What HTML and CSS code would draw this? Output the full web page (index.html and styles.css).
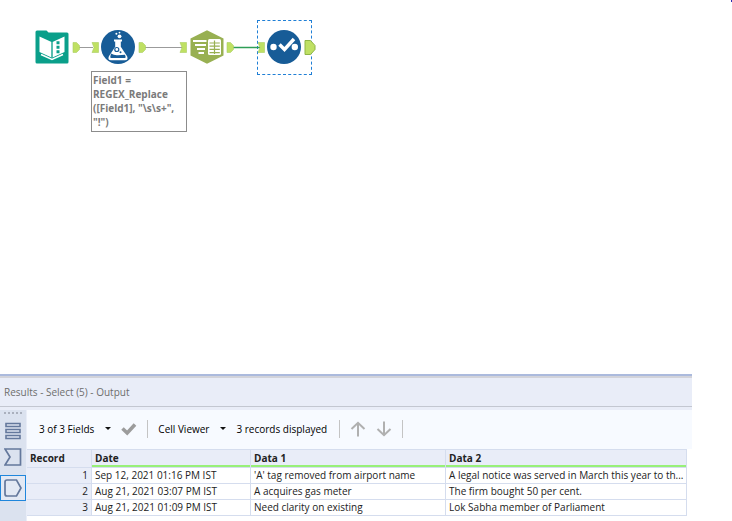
FILE: index.html
```html
<!DOCTYPE html>
<html lang="en">
<head>
  <meta charset="UTF-8">
  <meta name="viewport" content="width=device-width, initial-scale=1.0">
  <title>Results - Select (5) - Output</title>
  <link rel="stylesheet" href="styles.css">
</head>
<body>
  <main class="canvas">
    <div class="selection"></div>
    <!-- connections and anchors -->
    <svg class="wires" width="330" height="90" viewBox="0 0 330 90" aria-hidden="true">
      <path d="M79 47.500H93M145 47.500H182" stroke="#9b9b9b" fill="none"/>
      <path d="M233 47.500H260" stroke="#2f9e56" stroke-width="1.500" fill="none"/>
      <g fill="#bfe063" stroke="#a9cf62" stroke-width=".6">
        <path d="M73 42.500h3.500l3 3v4l-3 3H73zM139 42.500h3.500l3 3v4l-3 3H139zM227 42.500h3.500l3 3v4l-3 3H227z"/>
        <path d="M92 42.500h6.500v10H92l2-5zM180 42.500h6.500v10H180l2-5zM258 42.500h6.500v10H258l2-5z"/>
        <path d="M305 40.500h5.500l4.500 5v4l-4.500 5H305z" stroke="#8fb545" stroke-width="1"/>
      </g>
    </svg>

    <div class="node node-input">
      <svg width="34" height="34" viewBox="0 0 34 34" role="img" aria-label="Input Data">
        <path d="M2 .5h9.500l2 2H32q1.500 0 1.500 1.500v28q0 1.500-1.500 1.500H2Q.5 33.500.5 32V2Q.5.500 2 .5z" fill="#0a9f8a"/>
        <path d="M4.500 6.500L16.500 12v15.500L4.500 22zM29.500 6.500L17.500 12v15.500l12-5.500z" fill="#fff"/>
        <path d="M17 12v15" stroke="#0a9f8a" stroke-width=".7"/>
        <path d="M6 24.500l11 5 11-5" fill="none" stroke="#fff" stroke-width="1.500"/>
        <path d="M21.500 11.300h3v3h-3zM21.500 15.800h3v3h-3zM21.500 20.300h3v3h-3z" fill="#0a9f8a"/>
      </svg>
    </div>

    <div class="node node-formula">
      <svg width="34" height="34" viewBox="0 0 34 34" role="img" aria-label="Formula">
        <circle cx="17" cy="17" r="17" fill="#175c97"/>
        <path d="M13 9.500h8v2h-1.200v5.200l6.300 9.500q1.600 4-2.100 4H10q-3.700 0-2.100-4l6.300-9.500v-5.200H13z" fill="#fff"/>
        <path d="M10 23.500q3.500 2.200 7 1.700t7-.5l.6 2q.3 1.200-1 1.200H10.300q-1.300 0-1-1.200z" fill="#175c97"/>
        <circle cx="15.800" cy="19.500" r="2" fill="none" stroke="#175c97" stroke-width="1.200"/>
        <circle cx="19.500" cy="22.300" r="1" fill="#175c97"/>
        <circle cx="18.500" cy="6.300" r="1.900" fill="#fff"/>
        <circle cx="15.400" cy="3.800" r="1" fill="#fff"/>
        <circle cx="18.500" cy="2.600" r=".9" fill="#fff"/>
      </svg>
    </div>

    <p class="annotation">Field1 =<br>REGEX_Replace<br>([Field1], "\s\s+",<br>"!")</p>

    <div class="node node-columns">
      <svg width="34" height="34" viewBox="0 0 34 34" role="img" aria-label="Text To Columns">
        <path d="M17 .2l16.500 8.400v16.800L17 33.800.5 25.400V8.600z" fill="#98b052"/>
        <path d="M3 11h13.500M5 15h11M7 19h8M8.500 23h5.500" stroke="#fff" stroke-width="2" fill="none"/>
        <rect x="18" y="9" width="13" height="16" rx="1.500" fill="#fff"/>
        <path d="M19.500 13h10.300M19.500 16.200h10.300M19.500 19.400h10.300M19.500 22.600h10.300M24.500 10.500v13.500" stroke="#98b052" stroke-width="1.200" fill="none"/>
      </svg>
    </div>

    <div class="node node-select">
      <svg width="34" height="34" viewBox="0 0 34 34" role="img" aria-label="Select">
        <circle cx="17" cy="17" r="17" fill="#175c97"/>
        <circle cx="6.500" cy="17" r="3.200" fill="#fff"/>
        <circle cx="27.800" cy="17" r="3.200" fill="#fff"/>
        <path d="M12.500 14.500l5 5L27 9" fill="none" stroke="#fff" stroke-width="3.400"/>
      </svg>
    </div>
    <span class="mark"></span>
  </main>

  <section class="results">
    <h1 class="results-title">Results - Select (5) - Output</h1>
    <div class="results-body">
      <nav class="side">
        <span class="grip"></span>
        <button class="side-btn" type="button" aria-label="Messages">
          <svg width="18" height="18" viewBox="0 0 18 18">
            <path d="M2 1.500h14v3H2zM2 7.500h14v3H2zM2 13.500h14v3H2z" fill="none" stroke="#64789c" stroke-width="1.600"/>
          </svg>
        </button>
        <button class="side-btn" type="button" aria-label="Input anchor">
          <svg width="18" height="18" viewBox="0 0 18 18">
            <path d="M1 1h15.500v16H1l5-8z" fill="none" stroke="#64789c" stroke-width="1.700"/>
          </svg>
        </button>
        <button class="side-btn active" type="button" aria-label="Output anchor">
          <svg width="18" height="18" viewBox="0 0 18 18">
            <path d="M3 1h9.500l4.500 8-4.500 8H3q-2 0-2-2V3q0-2 2-2z" fill="none" stroke="#64789c" stroke-width="1.700"/>
          </svg>
        </button>
      </nav>

      <div class="data">
        <div class="toolbar">
          <button class="menu-btn" type="button" aria-haspopup="true">3 of 3 Fields <span class="caret"></span></button>
          <button class="icon-btn" type="button" aria-label="Apply">
            <svg width="16" height="14" viewBox="0 0 16 14">
              <path d="M1.500 6.500l4.700 4.500L14 2.500" fill="none" stroke="#9c9c9c" stroke-width="3.600"/>
            </svg>
          </button>
          <span class="divider"></span>
          <button class="menu-btn" type="button" aria-haspopup="true">Cell Viewer <span class="caret"></span></button>
          <span class="count">3 records displayed</span>
          <span class="divider"></span>
          <button class="icon-btn" type="button" aria-label="Previous">
            <svg width="16" height="16" viewBox="0 0 16 16">
              <path d="M8 15.500V2M1.500 8L8 1.800 14.500 8" fill="none" stroke="#b0b0b0" stroke-width="2"/>
            </svg>
          </button>
          <button class="icon-btn" type="button" aria-label="Next">
            <svg width="16" height="16" viewBox="0 0 16 16">
              <path d="M8 .5V14M1.500 8L8 14.200 14.500 8" fill="none" stroke="#b0b0b0" stroke-width="2"/>
            </svg>
          </button>
          <span class="divider"></span>
        </div>

        <table class="grid">
          <colgroup>
            <col class="col-record">
            <col class="col-date">
            <col class="col-data1">
            <col>
          </colgroup>
          <thead>
            <tr><th class="record">Record</th><th>Date</th><th>Data 1</th><th>Data 2</th></tr>
          </thead>
          <tbody>
            <tr><td class="record">1</td><td>Sep 12, 2021 01:16 PM IST</td><td>'A' tag removed from airport name</td><td>A legal notice was served in March this year to th...</td></tr>
            <tr><td class="record">2</td><td>Aug 21, 2021 03:07 PM IST</td><td>A acquires gas meter</td><td>The firm bought 50 per cent.</td></tr>
            <tr><td class="record">3</td><td>Aug 21, 2021 01:09 PM IST</td><td>Need clarity on existing</td><td>Lok Sabha member of Parliament</td></tr>
          </tbody>
        </table>
      </div>
    </div>
  </section>
</body>
</html>
```

FILE: styles.css
```css
* {
  box-sizing: border-box;
}
body {
  margin: 0;
  min-height: 100vh;
  display: flex;
  flex-direction: column;
  background-color: #fff;
  font-family: "Open Sans", "Noto Sans", sans-serif;
  font-size: 10px;
  color: #222;
}
button {
  padding: 0;
  border: none;
  background: none;
  font: inherit;
  color: inherit;
  cursor: pointer;
}
svg {
  display: block;
}

/* Workflow canvas */
.canvas {
  position: relative;
  flex: 1;
  min-height: 150px;
}
.wires {
  position: absolute;
  left: 0;
  top: 0;
}
.node {
  position: absolute;
  top: 30px;
}
.node-input {
  left: 35px;
}
.node-formula {
  left: 101px;
}
.node-columns {
  left: 190px;
}
.node-select {
  left: 267px;
}
.selection {
  position: absolute;
  left: 257px;
  top: 20px;
  width: 55px;
  height: 55px;
  border: 1px dashed #1f7fd6;
}
.annotation {
  position: absolute;
  left: 91px;
  top: 71px;
  width: 96px;
  height: 61px;
  margin: 0;
  padding: 1px;
  border: 1px solid #8c8c8c;
  font-weight: bold;
  line-height: 14px;
  color: #7a7a7a;
  white-space: nowrap;
}
.mark {
  position: absolute;
  right: 0;
  top: 0;
  width: 1px;
  height: 2px;
  background-color: #2a2ab0;
}

/* Results window */
.results {
  margin-right: 40px;
  border-top: 2px solid #abbadd;
  background-color: #fff;
}
.results-title {
  margin: 0;
  padding: 0 4px;
  border-top: 2px solid #d2d3da;
  border-bottom: 1px solid #c3c7d1;
  background-color: #e9edf8;
  font-size: 10px;
  font-weight: normal;
  line-height: 28px;
  color: #6d6d6d;
}
.results-body {
  display: flex;
  border-top: 3px solid #e9edf8;
}
.side {
  display: flex;
  flex-direction: column;
  align-items: center;
  width: 27px;
  padding-top: 2px;
  background-color: #dbe2ef;
  border-right: 1px solid #e9edf8;
}
.grip {
  width: 18px;
  border-top: 2px dotted #aab0bd;
  margin-bottom: 4px;
}
.side-btn {
  display: flex;
  align-items: center;
  justify-content: center;
  width: 26px;
  height: 26px;
}
.side-btn.active {
  margin-top: 5px;
  border: 1px solid #1f86dc;
  background-color: #e3e9f4;
}
.data {
  flex: 1;
  min-width: 0;
  padding-bottom: 5px;
}
.toolbar {
  display: flex;
  align-items: center;
  gap: 10px;
  height: 39px;
  padding: 0 0 2px 12px;
  background-color: #f7faff;
  color: #000;
}
.menu-btn {
  display: flex;
  align-items: center;
  gap: 11px;
  white-space: nowrap;
}
.caret {
  border: 3px solid transparent;
  border-top-color: #111;
  border-bottom: none;
}
.count {
  padding-right: 2px;
  white-space: nowrap;
}
.divider {
  width: 1px;
  height: 18px;
  background-color: #c4c4c4;
}

/* Data grid */
.grid {
  width: calc(100% - 5px);
  table-layout: fixed;
  border-collapse: separate;
  border-spacing: 0;
}
.col-record {
  width: 65px;
}
.col-date {
  width: 159px;
}
.col-data1 {
  width: 195px;
}
.grid th,
.grid td {
  height: 16px;
  padding: 0 3px;
  border-right: 1px solid #d5ddee;
  border-bottom: 1px solid #d5ddee;
  line-height: 15px;
  text-align: left;
  white-space: nowrap;
  overflow: hidden;
}
.grid th {
  height: 19px;
  background-color: #e9edf8;
  border-top: 1px solid #d5ddee;
  box-shadow: inset 0 -2px #98f078;
}
.grid .record {
  background-color: #e9edf8;
  box-shadow: none;
}
.grid td.record {
  text-align: right;
}
```
